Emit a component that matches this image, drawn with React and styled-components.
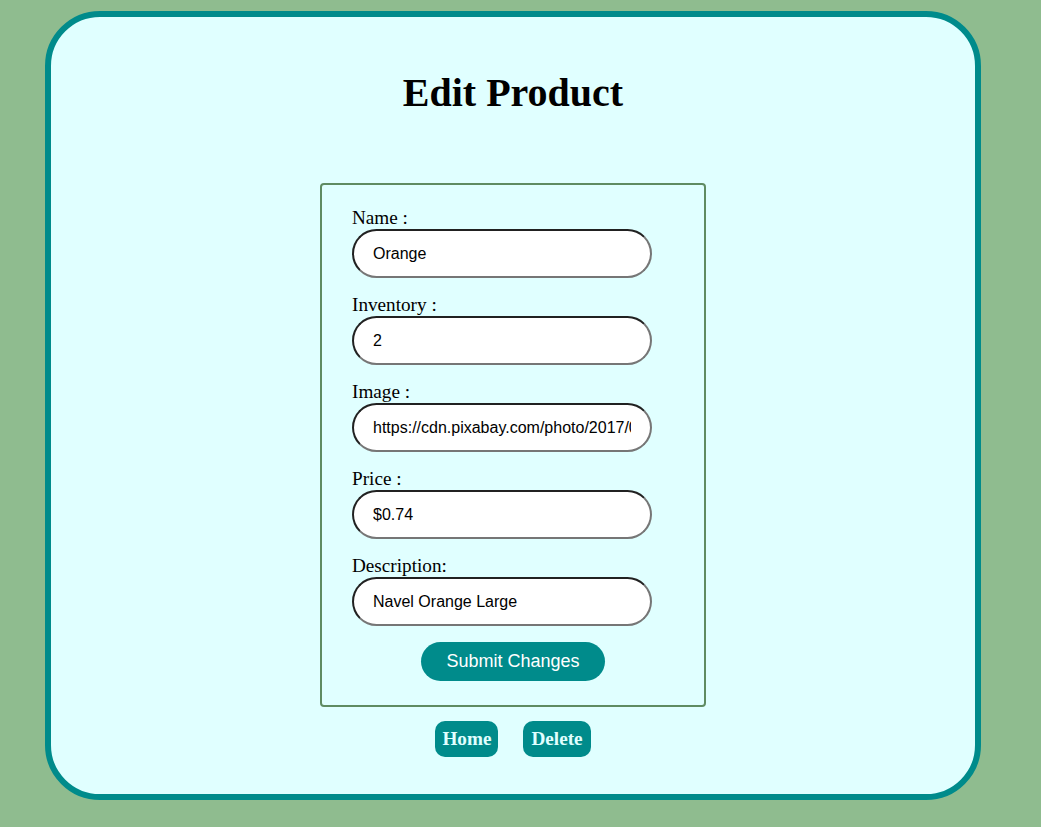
import React, { useState } from 'react'
import styled, { createGlobalStyle } from 'styled-components'

const GlobalStyle = createGlobalStyle`
  html, body {
    margin: 0;
    padding: 0;
    background: #8fbc8f;
    font-family: "Liberation Serif", "Times New Roman", serif;
  }
`

const Page = styled.div`
  min-height: 827px;
  box-sizing: border-box;
  padding: 11px 60px 27px 45px;
  background: #8fbc8f;
`

const Card = styled.main`
  box-sizing: border-box;
  height: 789px;
  background: #e0ffff;
  border: 6px solid #008b8b;
  border-radius: 55px;
  padding-top: 53px;
  display: flex;
  flex-direction: column;
  align-items: center;
`

const Title = styled.h1`
  margin: 0 0 67px;
  font-size: 40px;
  line-height: 46px;
  font-weight: bold;
  color: #000;
`

const Form = styled.form`
  box-sizing: border-box;
  width: 386px;
  border: 2px solid #5f8b62;
  border-radius: 4px;
  padding: 22px 30px 24px;
  display: flex;
  flex-direction: column;
`

const Field = styled.div`
  display: flex;
  flex-direction: column;
  align-items: flex-start;
  margin-bottom: 16px;
`

const Label = styled.label`
  font-size: 19.2px;
  line-height: 22px;
  color: #000;
`

const Input = styled.input`
  box-sizing: border-box;
  width: 300px;
  height: 49px;
  border: 2px inset #767676;
  border-radius: 25px;
  padding: 0 19px;
  background: #fff;
  font-family: "Liberation Sans", Arial, sans-serif;
  font-size: 16px;
  color: #000;
  outline: none;
`

const Submit = styled.button`
  align-self: center;
  background: #008b8b;
  color: #fff;
  border: none;
  border-radius: 20px;
  padding: 9px 25px;
  font-family: "Liberation Sans", Arial, sans-serif;
  font-size: 18px;
  line-height: 21px;
  cursor: pointer;
`

const Actions = styled.div`
  display: flex;
  gap: 25px;
  margin-top: 14px;
`

const NavButton = styled.button`
  background: #008b8b;
  color: #e0ffff;
  border: none;
  border-radius: 10px;
  padding: 7px ${p => (p.$wide ? '8px' : '7px')};
  font-family: "Liberation Serif", "Times New Roman", serif;
  font-weight: bold;
  font-size: 19.2px;
  line-height: 22px;
  cursor: pointer;
`

const fields = [
  { key: 'name', label: 'Name :', value: 'Orange' },
  { key: 'inventory', label: 'Inventory :', value: '2' },
  { key: 'image', label: 'Image :', value: 'https://cdn.pixabay.com/photo/2017/01/20/15/06/oranges-1995056_960_720.jpg' },
  { key: 'price', label: 'Price :', value: '$0.74' },
  { key: 'description', label: 'Description:', value: 'Navel Orange Large' },
]

const App = () => {
  const [product, setProduct] = useState(
    Object.fromEntries(fields.map(f => [f.key, f.value]))
  )

  return (
    <Page>
      <GlobalStyle />
      <Card>
        <Title>Edit Product</Title>
        <Form onSubmit={e => e.preventDefault()}>
          {fields.map(f => (
            <Field key={f.key}>
              <Label htmlFor={f.key}>{f.label}</Label>
              <Input
                id={f.key}
                value={product[f.key]}
                onChange={e => setProduct({ ...product, [f.key]: e.target.value })}
              />
            </Field>
          ))}
          <Submit type="submit">Submit Changes</Submit>
        </Form>
        <Actions>
          <NavButton>Home</NavButton>
          <NavButton $wide>Delete</NavButton>
        </Actions>
      </Card>
    </Page>
  )
}

export default App
